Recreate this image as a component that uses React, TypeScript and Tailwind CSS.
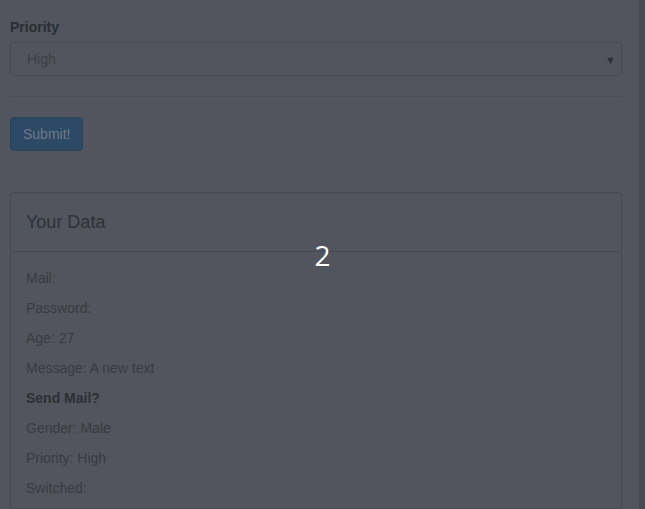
import React from "react";

// Linhas do painel "Your Data"
const rows: { label: string; value?: string; bold?: boolean }[] = [
  { label: "Mail:" },
  { label: "Password:" },
  { label: "Age:", value: "27" },
  { label: "Message:", value: "A new text" },
  { label: "Send Mail?", bold: true },
  { label: "Gender:", value: "Male" },
  { label: "Priority:", value: "High" },
  { label: "Switched:" },
];

function App() {
  return (
    <div
      className="relative flex h-[509px] w-[645px] overflow-hidden bg-[#52555d] text-[14px] leading-[20px] text-[#33363d]"
      style={{ fontFamily: '"Liberation Sans", Arial, sans-serif' }}
    >
      <div className="flex-1 pl-[10px] pr-[17px] pt-[17px]">
        {/* Campo de prioridade */}
        <label className="mb-[5px] block font-bold text-[#2a2d33]">Priority</label>
        <div className="relative flex h-[34px] items-center rounded-[4px] border border-[#484b53] px-[16px] text-[#3c3f46]">
          <span>High</span>
          <span className="absolute right-[5px] top-[7px] text-[11px] text-[#2c2f35]">▼</span>
        </div>

        <hr className="mb-[20px] mt-[20px] border-t border-[#4a4d55]" />

        <button className="h-[34px] rounded-[4px] border border-[#2a425b] bg-[#2c4965] px-[12px] text-[#6f7b8b]">
          Submit!
        </button>

        {/* Painel com os dados */}
        <div className="mt-[41px] rounded-[4px] border border-[#474a52]">
          <div className="flex h-[59px] items-center border-b border-[#474a52] px-[15px] text-[18px] text-[#2e3138]">
            Your Data
          </div>
          <div className="px-[15px] pt-[16px]">
            {rows.map((r) => (
              <p key={r.label} className={"mb-[10px] " + (r.bold ? "font-bold text-[#2c2f35]" : "text-[#383b42]")}>
                {r.label}
                {r.value ? " " + r.value : ""}
              </p>
            ))}
          </div>
        </div>
      </div>
      <div className="w-[6px] bg-[#464a53]" />

      <div
        className="absolute inset-x-0 top-[238px] text-center text-[28px] leading-[34px] text-white"
        style={{ fontFamily: '"Open Sans", sans-serif' }}
      >
        2
      </div>
    </div>
  );
}

export default App;
